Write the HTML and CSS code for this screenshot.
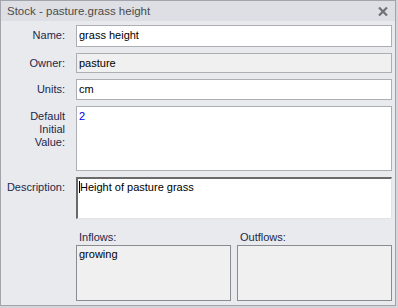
FILE: index.html
```html
<!DOCTYPE html>
<html lang="en">
<head>
    <meta charset="UTF-8">
    <title>Stock - pasture.grass height</title>
    <link rel="stylesheet" href="styles.css">
</head>
<body>
    <div class="window">
        <div class="title-bar">
            <span class="title">Stock - pasture.grass height</span>
            <span class="close">
                <svg width="10" height="9" viewBox="0 0 10 9">
                    <path d="M1 0.5 L9 8.5 M9 0.5 L1 8.5" stroke="#707079" stroke-width="2.2" fill="none"/>
                </svg>
            </span>
        </div>

        <div class="form">
            <label class="label">Name:</label>
            <div class="field field-name">grass height</div>

            <label class="label">Owner:</label>
            <div class="field field-owner readonly">pasture</div>

            <label class="label">Units:</label>
            <div class="field field-units">cm</div>

            <label class="label">Default<br>Initial<br>Value:</label>
            <div class="field field-value"><span class="number">2</span></div>

            <label class="label">Description:</label>
            <div class="field field-desc"><span class="caret"></span>Height of pasture grass</div>

            <div></div>
            <div class="flows">
                <div class="flow">
                    <div class="flow-label">Inflows:</div>
                    <div class="flow-list">growing</div>
                </div>
                <div class="flow">
                    <div class="flow-label">Outflows:</div>
                    <div class="flow-list"></div>
                </div>
            </div>
        </div>
    </div>
</body>
</html>
```

FILE: styles.css
```css
* {
    margin: 0;
    padding: 0;
    box-sizing: border-box;
}

body {
    background-color: #d4d5db;
    font-family: 'Liberation Sans', Arial, sans-serif;
    font-size: 11px;
    width: 398px;
    height: 308px;
}

.window {
    width: 396px;
    height: 306px;
    border: 1px solid #a2a4ab;
    background-color: #e9eaee;
}

.title-bar {
    height: 20px;
    background-color: #dedfe4;
    display: flex;
    align-items: center;
    justify-content: space-between;
    padding: 0 7px 0 6px;
}

.title {
    color: #4b4b4b;
    font-size: 11.5px;
}

.close {
    display: flex;
    margin-top: 1px;
}

.form {
    display: grid;
    grid-template-columns: 64px 1fr;
    grid-template-rows: 22px 20px 21px 65px 42px auto;
    column-gap: 11px;
    row-gap: 6px;
    padding: 4px 3px 0 0;
}

.label {
    text-align: right;
    color: #22284a;
    line-height: 13px;
    padding-top: 4px;
}

.field {
    background-color: #fff;
    border: 1px solid #acaeb4;
    padding: 3px 2px;
    line-height: 13px;
    color: #000;
}

.readonly {
    background-color: #f0f0f0;
}

.number {
    color: #0000ee;
}

.field-desc {
    border-color: #e3e3e3;
    border-top: 2px solid #6a6a6a;
    border-left: 2px solid #6a6a6a;
    padding: 2px 1px;
}

.caret {
    display: inline-block;
    width: 1px;
    height: 12px;
    background-color: #000;
    vertical-align: -2px;
}

.flows {
    display: grid;
    grid-template-columns: 1fr 1fr;
    column-gap: 6px;
}

.flow-label {
    color: #22284a;
    line-height: 13px;
    padding: 6px 0 1px 3px;
}

.flow-list {
    height: 56px;
    margin-top: 0;
    background-color: #f0f0f0;
    border: 1px solid #8b8c91;
    padding: 2px;
    line-height: 13px;
    color: #000;
}
```
